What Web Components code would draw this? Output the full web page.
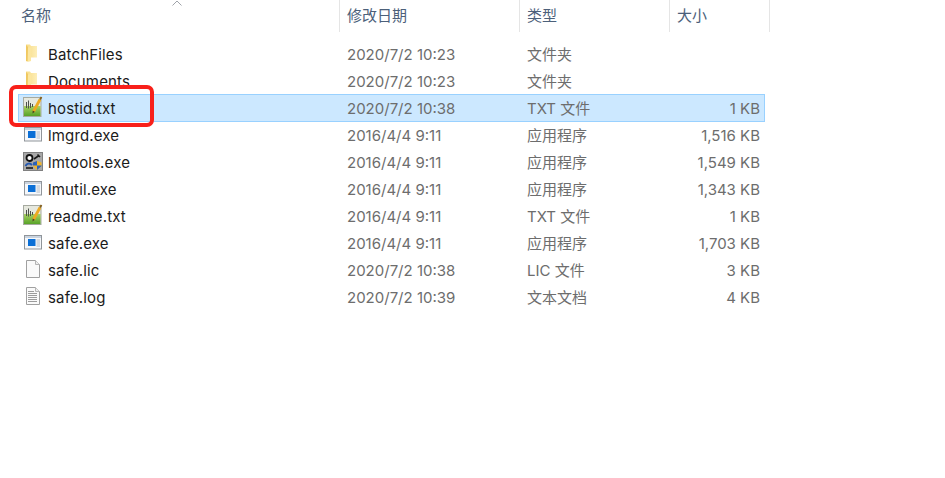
<!DOCTYPE html>
<html lang="zh-CN">

<head>
  <meta charset="UTF-8">
  <title>file list</title>
  <style>
    html, body { margin: 0; background: #fff; }
  </style>
</head>

<body>
  <template id="icons">
    <svg data-name="folder" viewBox="0 0 20 20" width="20" height="20">
      <defs><linearGradient id="f" x1="0" x2="1" y1="0" y2="0"><stop offset="0" stop-color="#f8dc85"/><stop offset="1" stop-color="#fdeeb8"/></linearGradient></defs>
      <path d="M3 .5h4l1 1.500h6v11.500H8v3.500l-3 .5-2-.5z" fill="url(#f)"/>
      <path d="M3 1v16l1.500.5L5 3z" fill="#f0c860"/>
      <path d="M5 3.500h3v13.500l-3 .5z" fill="#fbe6a0"/>
    </svg>
    <svg data-name="note" viewBox="0 1 20 20" width="20" height="20" style="overflow:visible">
      <defs><linearGradient id="g" x1="0" x2="0" y1="0" y2="1"><stop offset="0" stop-color="#a9d163"/><stop offset="1" stop-color="#58a329"/></linearGradient></defs>
      <rect x=".5" y=".5" width="17.500" height="19" fill="#e6e8de" stroke="#a6aaa0"/>
      <rect x="1" y="9" width="16.500" height="10" fill="url(#g)"/>
      <path d="M3.500 5v6M5.500 3.500v8M7.500 6v5M9.500 7v3" stroke="#4d524b" stroke-width="1"/>
      <path d="M10.500 14.500 17 2.500" stroke="#eda922" stroke-width="2.800"/>
      <path d="M17 2.500 18.500 0" stroke="#84601f" stroke-width="1.800"/>
      <path d="M9.500 16.500l.2-3 2.200 1.200z" fill="#4f4320"/>
    </svg>
    <svg data-name="exe" viewBox="0 0 20 20" width="20" height="20">
      <rect x="1.500" y="2.500" width="17" height="13.500" fill="#f5f7fa" stroke="#90959a"/>
      <rect x="2" y="3" width="16" height="2" fill="#c9d3df"/>
      <rect x="5" y="6" width="7.500" height="7" fill="#0b6fd6"/>
      <path d="M13.500 7h3.500M13.500 9h3.500M13.500 11h3.500M13.500 13h3.500" stroke="#b4bcc6"/>
    </svg>
    <svg data-name="tools" viewBox="0 0 20 20" width="20" height="20">
      <rect width="20" height="19" fill="#808080"/>
      <rect x="1" y="1" width="18" height="17" fill="#a8a8a8"/>
      <circle cx="6.500" cy="6" r="3" fill="#fff" stroke="#111" stroke-width="1.800"/>
      <path d="M11 7 16 3.500M14.500 2.500l2.500 2.500" stroke="#1a1a1a" stroke-width="1.600" fill="none"/>
      <path d="M2.500 14c1.500-3 4.500-3 6.500-1" fill="none" stroke="#2458b0" stroke-width="2"/>
      <path d="M3 16h7" stroke="#111" stroke-width="1.500"/>
      <path d="M14 9l4.500 1.500v3.500L14 18l-4-4v-3.500z" fill="#f0b429"/>
      <path d="M14 9v4.500h-4v-3zM14 13.500h4.500v.5L14 18z" fill="#2a62bd"/>
    </svg>
    <svg data-name="page" viewBox="0 0 20 20" width="20" height="20">
      <path d="M3.500 .5h9l4 4v13h-13z" fill="#fafafa" stroke="#a0a0a0"/>
      <path d="M12.500 .5v4h4" fill="#eee" stroke="#b5b5b5"/>
    </svg>
    <svg data-name="log" viewBox="0 0 20 20" width="20" height="20">
      <path d="M3.500 .5h9l4 4v13h-13z" fill="#fafafa" stroke="#a0a0a0"/>
      <path d="M12.500 .5v4h4" fill="#eee" stroke="#b5b5b5"/>
      <path d="M5 4.500h6M5 6.500h9M5 8.500h9M5 10.500h9M5 12.500h9M5 14.500h9" stroke="#9c9c9c"/>
    </svg>
  </template>

  <file-list>
    <file-head slot="head"></file-head>
    <file-row icon="folder" name="BatchFiles" date="2020/7/2 10:23" kind="文件夹"></file-row>
    <file-row icon="folder" name="Documents" date="2020/7/2 10:23" kind="文件夹"></file-row>
    <file-row icon="note" name="hostid.txt" date="2020/7/2 10:38" kind="TXT 文件" size="1 KB" selected></file-row>
    <file-row icon="exe" name="lmgrd.exe" date="2016/4/4 9:11" kind="应用程序" size="1,516 KB"></file-row>
    <file-row icon="tools" name="lmtools.exe" date="2016/4/4 9:11" kind="应用程序" size="1,549 KB"></file-row>
    <file-row icon="exe" name="lmutil.exe" date="2016/4/4 9:11" kind="应用程序" size="1,343 KB"></file-row>
    <file-row icon="note" name="readme.txt" date="2016/4/4 9:11" kind="TXT 文件" size="1 KB"></file-row>
    <file-row icon="exe" name="safe.exe" date="2016/4/4 9:11" kind="应用程序" size="1,703 KB"></file-row>
    <file-row icon="page" name="safe.lic" date="2020/7/2 10:38" kind="LIC 文件" size="3 KB"></file-row>
    <file-row icon="log" name="safe.log" date="2020/7/2 10:39" kind="文本文档" size="4 KB"></file-row>
    <mark-box slot="over"></mark-box>
  </file-list>

  <script>
    const FONT = '"Inter", "Noto Sans CJK SC", sans-serif'

    class FileList extends HTMLElement {
      constructor() {
        super()
        this.attachShadow({ mode: 'open' }).innerHTML = `
          <style>
            :host { display: block; position: relative; width: 945px; height: 478px; overflow: hidden;
              background: #fff; font: 15px/27px ${FONT}; }
            .rows { display: flex; flex-direction: column; padding: 8px 0 0 18px; width: 747px; }
          </style>
          <slot name="head"></slot>
          <div class="rows"><slot></slot></div>
          <slot name="over"></slot>`
      }
    }

    class FileHead extends HTMLElement {
      constructor() {
        super()
        const cols = [['名称', 340], ['修改日期', 180], ['类型', 150], ['大小', 100]]
        this.attachShadow({ mode: 'open' }).innerHTML = `
          <style>
            :host { display: flex; height: 32px; position: relative; color: #4c607a; font-size: 15px; line-height: 32px; }
            div { box-sizing: border-box; border-right: 1px solid #e5e5e5; padding-left: 7px; }
            div:first-of-type { padding-left: 21px; }
            svg { position: absolute; left: 171px; top: 0; }
          </style>
          ${cols.map(([t, w]) => `<div style="width:${w}px">${t}</div>`).join('')}
          <svg width="12" height="6" viewBox="0 0 12 6"><path d="M1.500 5.500 6 1l4.500 4.500" fill="none" stroke="#a0a4aa"/></svg>`
      }
    }

    class FileRow extends HTMLElement {
      constructor() {
        super()
        const a = n => this.getAttribute(n) ?? ''
        const icon = document.querySelector('#icons').content.querySelector(`[data-name="${a('icon')}"]`)
        this.attachShadow({ mode: 'open' }).innerHTML = `
          <style>
            :host { display: grid; grid-template-columns: 329px 180px 150px 1fr; height: 27px; box-sizing: border-box;
              color: #6d6d6d; white-space: nowrap; }
            :host([selected]) { background: #cce8ff; outline: 1px solid #99d1ff; outline-offset: -1px; height: 28px; margin-bottom: -1px; }
            :host > div { padding-top: 1px; height: 26px; }
            .name { display: flex; align-items: flex-start; gap: 5px; padding-left: 5px; color: #1b1b1b; }
            .name span:last-child { letter-spacing: .15px; }
            #ic { display: block; width: 20px; height: 20px; margin-top: 3px; }
            #ic svg { display: block; }
            .size { text-align: right; padding-right: 5px; }
          </style>
          <div class="name"><span id="ic"></span><span>${a('name')}</span></div>
          <div>${a('date')}</div>
          <div>${a('kind')}</div>
          <div class="size">${a('size')}</div>`
        this.shadowRoot.querySelector('#ic').appendChild(icon.cloneNode(true))
      }
    }

    class MarkBox extends HTMLElement {
      constructor() {
        super()
        this.attachShadow({ mode: 'open' }).innerHTML = `
          <style>
            :host { position: absolute; left: 9px; top: 85px; width: 145px; height: 42px; box-sizing: border-box;
              border: 4px solid #f8201a; border-radius: 7px; }
          </style>`
      }
    }

    customElements.define('file-list', FileList)
    customElements.define('file-head', FileHead)
    customElements.define('file-row', FileRow)
    customElements.define('mark-box', MarkBox)
  </script>
</body>

</html>
